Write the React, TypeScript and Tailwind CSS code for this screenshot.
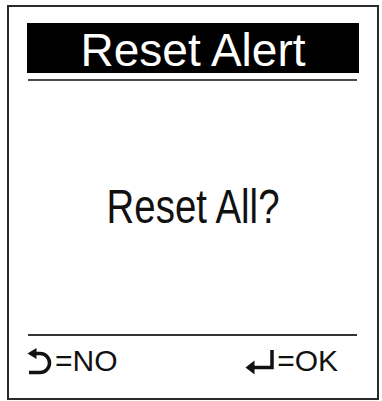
export default function App() {
  return (
    <div className="w-[382px] h-[401px] bg-white pt-[5px] pl-[7px]" style={{ fontFamily: '"Liberation Sans", Arial, sans-serif' }}>
      <div className="w-[372px] h-[395px] border-2 border-[#2a2a2a] px-[18px] pt-[16px] flex flex-col">
        {/* Header */}
        <div className="h-[50px] bg-black text-white text-[46px] leading-[50px] text-center pt-[2px]">
          Reset Alert
        </div>
        <div className="mt-[6px] ml-[1px] mr-[2px] h-[2px] bg-[#4a4a4a]" />

        {/* Message */}
        <div className="mt-[102px] h-[48px] text-[48px] leading-[48px] text-center text-[#111]">
          <span className="inline-block scale-x-[0.8]">Reset All?</span>
        </div>

        {/* Footer */}
        <div className="mt-[103px] ml-[1px] mr-[2px] h-[2px] bg-[#333]" />
        <div className="mt-[10px] flex items-start justify-between text-[30px] leading-[30px] text-[#111]">
          <div className="flex items-start">
            <svg width="25" height="27" viewBox="0 0 25 27" className="mt-[2px]">
              <path d="M0.5 5.5 L9.5 0 L9.5 11 Z" fill="#111" />
              <path d="M8 5.5 H13 A9.5 9.5 0 0 1 13 24.5 H2" fill="none" stroke="#111" strokeWidth="3.5" />
            </svg>
            <span className="ml-[3px]">=NO</span>
          </div>
          <div className="flex items-start mr-[21px]">
            <svg width="30" height="28" viewBox="0 0 30 28" className="mt-[3px]">
              <path d="M27 1 V18.5 H8" fill="none" stroke="#111" strokeWidth="3.5" />
              <path d="M0.5 18.5 L9.5 11.5 L9.5 25.5 Z" fill="#111" />
            </svg>
            <span className="ml-[2px]">=OK</span>
          </div>
        </div>
      </div>
    </div>
  );
}
